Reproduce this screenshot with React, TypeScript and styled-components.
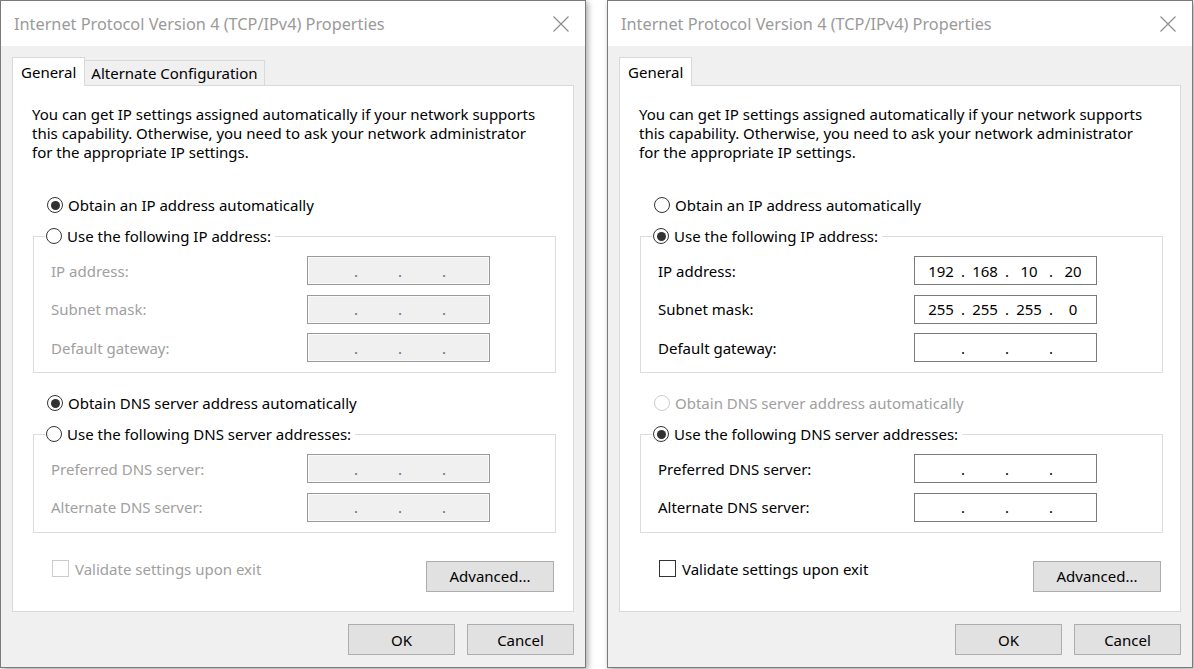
import React from "react";
import styled, { createGlobalStyle } from "styled-components";

const FONT = `"Segoe UI", "Noto Sans", "Open Sans", sans-serif`;

const GlobalStyle = createGlobalStyle`
  html, body {
    margin: 0;
    padding: 0;
    background: #ffffff;
  }

  body {
    font-family: ${FONT};
    font-size: 15px;
    color: #000;
  }

  * {
    box-sizing: border-box;
  }
`;

type Field = { label: string; value?: string[] };

type AddressSection = {
  autoLabel: string;
  manualLabel: string;
  manual: boolean;
  autoDisabled?: boolean;
  fields: Field[];
};

type DialogData = {
  tabs: string[];
  ip: AddressSection;
  dns: AddressSection;
  validateEnabled: boolean;
};

const ipLabels = ["IP address:", "Subnet mask:", "Default gateway:"];
const dnsLabels = ["Preferred DNS server:", "Alternate DNS server:"];

const dialogs: DialogData[] = [
  {
    tabs: ["General", "Alternate Configuration"],
    ip: {
      autoLabel: "Obtain an IP address automatically",
      manualLabel: "Use the following IP address:",
      manual: false,
      fields: ipLabels.map((label) => ({ label })),
    },
    dns: {
      autoLabel: "Obtain DNS server address automatically",
      manualLabel: "Use the following DNS server addresses:",
      manual: false,
      fields: dnsLabels.map((label) => ({ label })),
    },
    validateEnabled: false,
  },
  {
    tabs: ["General"],
    ip: {
      autoLabel: "Obtain an IP address automatically",
      manualLabel: "Use the following IP address:",
      manual: true,
      fields: [
        { label: "IP address:", value: ["192", "168", "10", "20"] },
        { label: "Subnet mask:", value: ["255", "255", "255", "0"] },
        { label: "Default gateway:" },
      ],
    },
    dns: {
      autoLabel: "Obtain DNS server address automatically",
      manualLabel: "Use the following DNS server addresses:",
      manual: true,
      autoDisabled: true,
      fields: dnsLabels.map((label) => ({ label })),
    },
    validateEnabled: true,
  },
];

const Desktop = styled.main`
  display: flex;
  gap: 21px;
  width: 1194px;
  height: 669px;
  overflow: hidden;
`;

const Window = styled.section`
  width: 586px;
  height: 668px;
  flex-shrink: 0;
  display: flex;
  flex-direction: column;
  background: #f0f0f0;
  border: 1px solid #7a7a7a;
  box-shadow: 2px 2px 6px rgba(0, 0, 0, 0.35);
`;

const TitleBar = styled.header`
  height: 45px;
  flex-shrink: 0;
  background: #fff;
  display: flex;
  align-items: center;
  justify-content: space-between;
  padding: 0 16px 0 13px;
`;

const Title = styled.h1`
  margin: 0;
  font-size: 16.3px;
  font-weight: 400;
  color: #9a9a9a;
`;

const Body = styled.div`
  flex: 1;
  min-height: 0;
  display: flex;
  flex-direction: column;
  padding: 11px 11px 12px 11px;
`;

const TabStrip = styled.div`
  height: 28px;
  flex-shrink: 0;
  display: flex;
  align-items: flex-end;
`;

const Tab = styled.div<{ $active?: boolean }>`
  position: relative;
  display: flex;
  align-items: center;
  border: 1px solid #d9d9d9;
  border-bottom: none;
  background: ${(p) => (p.$active ? "#fff" : "#f0f0f0")};
  height: ${(p) => (p.$active ? "29px" : "25px")};
  margin-bottom: ${(p) => (p.$active ? "-1px" : "0")};
  margin-left: ${(p) => (p.$active ? "0" : "-1px")};
  padding: ${(p) => (p.$active ? "0 8px" : "0 6px")};
  z-index: ${(p) => (p.$active ? 1 : 0)};
`;

const Panel = styled.div`
  flex: 1;
  min-height: 0;
  display: flex;
  flex-direction: column;
  background: #fff;
  border: 1px solid #d9d9d9;
  padding: 19px 17px 0 19px;
`;

const Intro = styled.p`
  margin: 0;
  line-height: 19px;
`;

const Section = styled.div<{ $top: number }>`
  margin-top: ${(p) => p.$top}px;
  display: flex;
  flex-direction: column;
`;

const RadioLabel = styled.label<{ $disabled?: boolean }>`
  display: inline-flex;
  align-items: center;
  gap: 5px;
  height: 20px;
  line-height: 20px;
  color: ${(p) => (p.$disabled ? "#a0a0a0" : "#000")};
`;

const AutoRadio = styled(RadioLabel)`
  margin-left: 15px;
  align-self: flex-start;
`;

const RadioDot = styled.span<{ $checked?: boolean; $disabled?: boolean }>`
  width: 16px;
  height: 16px;
  flex-shrink: 0;
  border-radius: 50%;
  border: 1px solid ${(p) => (p.$disabled ? "#cccccc" : "#333")};
  background: #fff;
  display: grid;
  place-items: center;

  &::after {
    content: "";
    width: 9px;
    height: 9px;
    border-radius: 50%;
    background: #333;
    display: ${(p) => (p.$checked ? "block" : "none")};
  }
`;

const Group = styled.fieldset`
  margin: 11px 0 0 1px;
  padding: 10px 0 10px 17px;
  border: 1px solid #dcdcdc;
  min-width: 0;
`;

const Legend = styled.legend`
  display: flex;
  height: 20px;
  line-height: 20px;
  margin-left: -6px;
  padding: 0 4px 0 1px;
`;

const Fields = styled.div`
  display: grid;
  grid-template-columns: 256px 183px;
  grid-auto-rows: 29px;
  row-gap: 9.5px;
  align-items: center;
`;

const FieldLabel = styled.span<{ $disabled?: boolean }>`
  color: ${(p) => (p.$disabled ? "#a0a0a0" : "#000")};
`;

const IpBox = styled.div<{ $disabled?: boolean }>`
  height: 29px;
  display: flex;
  align-items: center;
  padding-left: 6px;
  border: 1px solid ${(p) => (p.$disabled ? "#999" : "#7a7a7a")};
  background: ${(p) => (p.$disabled ? "#f0f0f0" : "#fff")};
  box-shadow: ${(p) => (p.$disabled ? "inset 0 0 0 1px #fafafa" : "none")};
  color: ${(p) => (p.$disabled ? "#6d6d7a" : "#000")};
`;

const Octet = styled.span`
  width: 40px;
  text-align: center;
`;

const IpDot = styled.span`
  width: 4px;
  text-align: center;
`;

const BottomRow = styled.div`
  margin-top: 27px;
  display: flex;
  justify-content: space-between;
  align-items: flex-start;
`;

const CheckLabel = styled.label<{ $disabled?: boolean }>`
  margin-left: 20px;
  display: inline-flex;
  align-items: center;
  gap: 6px;
  height: 18px;
  color: ${(p) => (p.$disabled ? "#a0a0a0" : "#000")};
`;

const CheckBox = styled.span<{ $disabled?: boolean }>`
  width: 17px;
  height: 17px;
  border: 1px solid ${(p) => (p.$disabled ? "#cccccc" : "#333")};
  background: #fff;
`;

const Button = styled.button<{ $width: number }>`
  width: ${(p) => p.$width}px;
  height: 31px;
  font-family: ${FONT};
  font-size: 15px;
  color: #000;
  background: #e1e1e1;
  border: 1px solid #adadad;
  padding: 0;
`;

const AdvancedButton = styled(Button)`
  margin-top: 1px;
  margin-right: 2px;
`;

const Footer = styled.footer`
  margin-top: 12px;
  flex-shrink: 0;
  display: flex;
  justify-content: flex-end;
  gap: 12px;
`;

function CloseIcon() {
  return (
    <svg width="16" height="16" viewBox="0 0 16 16">
      <path d="M0.5 0.5 L15.5 15.5 M15.5 0.5 L0.5 15.5" stroke="#8a8a8a" strokeWidth="1.1" />
    </svg>
  );
}

function IpField({ value, disabled }: { value?: string[]; disabled?: boolean }) {
  const parts = value ?? ["", "", "", ""];
  return (
    <IpBox $disabled={disabled}>
      {parts.map((part, i) => (
        <React.Fragment key={i}>
          {i > 0 && <IpDot>.</IpDot>}
          <Octet>{part}</Octet>
        </React.Fragment>
      ))}
    </IpBox>
  );
}

function Address({ section, top }: { section: AddressSection; top: number }) {
  return (
    <Section $top={top}>
      <AutoRadio $disabled={section.autoDisabled}>
        <RadioDot $checked={!section.manual} $disabled={section.autoDisabled} />
        {section.autoLabel}
      </AutoRadio>
      <Group>
        <Legend>
          <RadioLabel>
            <RadioDot $checked={section.manual} />
            {section.manualLabel}
          </RadioLabel>
        </Legend>
        <Fields>
          {section.fields.map((field) => (
            <React.Fragment key={field.label}>
              <FieldLabel $disabled={!section.manual}>{field.label}</FieldLabel>
              <IpField value={field.value} disabled={!section.manual} />
            </React.Fragment>
          ))}
        </Fields>
      </Group>
    </Section>
  );
}

function Dialog({ data }: { data: DialogData }) {
  return (
    <Window>
      <TitleBar>
        <Title>Internet Protocol Version 4 (TCP/IPv4) Properties</Title>
        <CloseIcon />
      </TitleBar>
      <Body>
        <TabStrip>
          {data.tabs.map((tab, i) => (
            <Tab key={tab} $active={i === 0}>
              {tab}
            </Tab>
          ))}
        </TabStrip>
        <Panel>
          <Intro>
            You can get IP settings assigned automatically if your network supports
            <br />
            this capability. Otherwise, you need to ask your network administrator
            <br />
            for the appropriate IP settings.
          </Intro>
          <Address section={data.ip} top={33} />
          <Address section={data.dns} top={20} />
          <BottomRow>
            <CheckLabel $disabled={!data.validateEnabled}>
              <CheckBox $disabled={!data.validateEnabled} />
              Validate settings upon exit
            </CheckLabel>
            <AdvancedButton $width={128}>Advanced...</AdvancedButton>
          </BottomRow>
        </Panel>
        <Footer>
          <Button $width={107}>OK</Button>
          <Button $width={107}>Cancel</Button>
        </Footer>
      </Body>
    </Window>
  );
}

export default function App() {
  return (
    <>
      <GlobalStyle />
      <Desktop>
        {dialogs.map((d, i) => (
          <Dialog key={i} data={d} />
        ))}
      </Desktop>
    </>
  );
}
